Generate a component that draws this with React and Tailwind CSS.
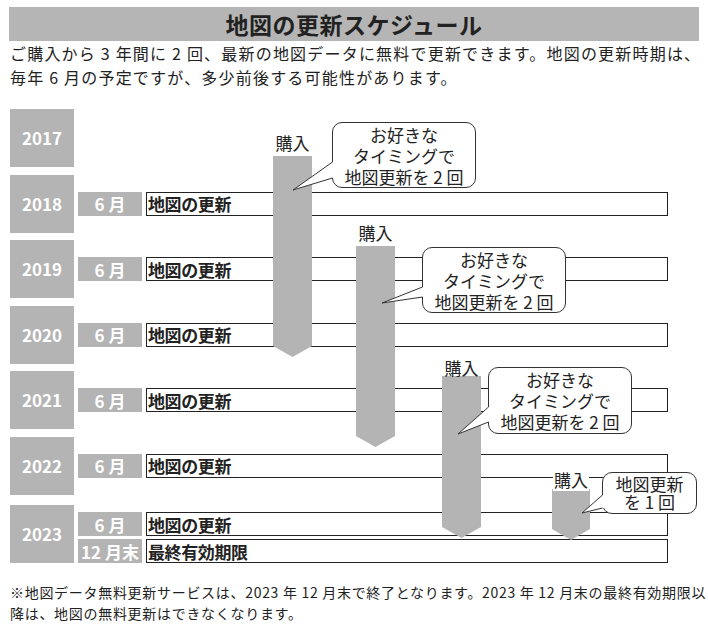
import React from 'react';

const ROWS = [
  { year: '2017', items: [] },
  { year: '2018', items: [['6 月', '地図の更新']] },
  { year: '2019', items: [['6 月', '地図の更新']] },
  { year: '2020', items: [['6 月', '地図の更新']] },
  { year: '2021', items: [['6 月', '地図の更新']] },
  { year: '2022', items: [['6 月', '地図の更新']] },
  { year: '2023', items: [['6 月', '地図の更新'], ['12 月末', '最終有効期限']] },
];

// purchase arrows (chart coords)
const ARROWS = [
  { pos: 'left-[273px] top-[47px]', w: 39, h: 201 },
  { pos: 'left-[356px] top-[137px]', w: 39, h: 201 },
  { pos: 'left-[442px] top-[267px]', w: 39, h: 162 },
  { pos: 'left-[552px] top-[380px]', w: 38, h: 51 },
];

const LABELS = [
  'left-[273px] top-[23px] w-[39px]',
  'left-[356px] top-[113px] w-[39px]',
  'left-[442px] top-[248px] w-[39px]',
];

const CALLOUTS = [
  'left-[332px] top-[13px] w-[144px] h-[66px]',
  'left-[422px] top-[138px] w-[144px] h-[66px]',
  'left-[488px] top-[258px] w-[144px] h-[67px]',
];

const TAILS = [
  { tx: 293, ty: 81, bx: 332, y1: 53, y2: 69 },
  { tx: 382, ty: 194, bx: 422, y1: 178, y2: 188 },
  { tx: 458, ty: 325, bx: 488, y1: 298, y2: 313 },
  { tx: 582, ty: 404, bx: 602, y1: 386, y2: 399 },
];

function Arrow({ pos, w, h }) {
  const pts = `0,0 ${w},0 ${w},${h - 11} ${w / 2},${h} 0,${h - 11}`;
  return (
    <svg className={`absolute ${pos}`} width={w} height={h} viewBox={`0 0 ${w} ${h}`}>
      <polygon points={pts} fill="#b4b4b4" />
    </svg>
  );
}

function YearRow({ year, items, last }) {
  return (
    <div className={`flex h-[58px] gap-[4px] pl-[10px] ${last ? 'items-end mt-[3px]' : 'items-center'}`}>
      <div className="w-[64px] h-full bg-[#b4b4b4] flex items-center justify-center self-stretch text-white font-bold text-[17px]">
        {year}
      </div>
      {items.length > 0 && (
        <div className="flex flex-col gap-[3px]">
          {items.map(([month, text]) => (
            <div key={month} className="flex gap-[4px]">
              <div className="w-[64px] h-[24px] bg-[#b4b4b4] flex items-center justify-center text-white font-bold text-[17px] leading-none whitespace-pre">
                {month}
              </div>
              <div className="w-[522px] h-[24px] border border-[#222] flex items-center pl-[1px] text-[17px] font-bold leading-none tracking-[-0.4px]">
                {text}
              </div>
            </div>
          ))}
        </div>
      )}
    </div>
  );
}

export default function App() {
  return (
    <div className="w-[708px] h-[625px] bg-white text-[#222] font-['Noto_Sans_CJK_JP','Noto_Sans',sans-serif] overflow-hidden">
      <div className="mx-[9px] mt-[7px] h-[34px] bg-[#b5b5b5] flex items-center justify-center text-[23px] font-bold tracking-[0.5px]">
        地図の更新スケジュール
      </div>

      <p className="px-[10px] text-[16px] leading-[24px] tracking-[1.2px] whitespace-nowrap">
        ご購入から 3 年間に 2 回、最新の地図データに無料で更新できます。地図の更新時期は、
        <br />
        毎年 6 月の予定ですが、多少前後する可能性があります。
      </p>

      <div className="relative mt-[20px]">
        <div className="flex flex-col gap-[7.5px]">
          {ROWS.map((r, i) => (
            <YearRow key={r.year} year={r.year} items={r.items} last={i === ROWS.length - 1} />
          ))}
        </div>

        {ARROWS.map((a) => (
          <Arrow key={a.pos} {...a} />
        ))}

        {LABELS.map((pos) => (
          <div key={pos} className={`absolute ${pos} h-[22px] leading-[22px] text-center text-[17px]`}>
            購入
          </div>
        ))}
        <div className="absolute left-[552px] top-[360px] w-[38px] flex justify-center">
          <span className="bg-white px-[1px] text-[17px] leading-[22px]">購入</span>
        </div>

        {CALLOUTS.map((pos) => (
          <div
            key={pos}
            className={`absolute ${pos} bg-white border border-[#333] rounded-[10px] flex items-center justify-center text-center text-[17px] leading-[21px]`}
          >
            <span>
              お好きな
              <br />
              タイミングで
              <br />
              地図更新を 2 回
            </span>
          </div>
        ))}
        <div className="absolute left-[602px] top-[363px] w-[95px] h-[42px] bg-white border border-[#333] rounded-[10px] flex items-center justify-center text-center text-[17px] leading-[18px]">
          <span>
            地図更新
            <br />
            を 1 回
          </span>
        </div>

        {/* speech bubble tails */}
        <svg className="absolute left-0 top-0 pointer-events-none overflow-visible" width="708" height="460">
          {TAILS.map((t) => (
            <g key={t.tx}>
              <polygon
                points={`${t.tx},${t.ty} ${t.bx + 0.5},${t.y1} ${t.bx + 2},${t.y1} ${t.bx + 2},${t.y2} ${t.bx + 0.5},${t.y2}`}
                fill="white"
              />
              <line x1={t.tx} y1={t.ty} x2={t.bx + 0.5} y2={t.y1} stroke="#333" strokeWidth="1" />
              <line x1={t.tx} y1={t.ty} x2={t.bx + 0.5} y2={t.y2} stroke="#333" strokeWidth="1" />
            </g>
          ))}
        </svg>
      </div>

      <p className="mt-[19px] px-[10px] text-[14px] leading-[21px] tracking-[0.7px] whitespace-nowrap">
        ※地図データ無料更新サービスは、2023 年 12 月末で終了となります。2023 年 12 月末の最終有効期限以
        <br />
        降は、地図の無料更新はできなくなります。
      </p>
    </div>
  );
}
